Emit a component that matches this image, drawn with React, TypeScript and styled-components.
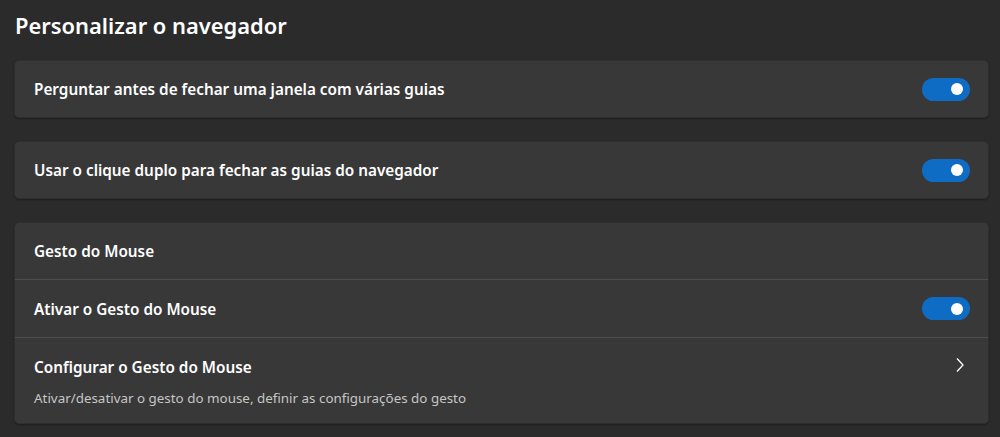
import React from "react";
import styled, { createGlobalStyle } from "styled-components";

const Global = createGlobalStyle`
  html, body { margin: 0; padding: 0; background: #2b2b2b; }
  body { font-family: "Noto Sans", "Open Sans", sans-serif; color: #ffffff; }
`;

const Page = styled.div`
  width: 1000px;
  height: 437px;
  box-sizing: border-box;
  padding: 11px 11px 0 14px;
  background: #2b2b2b;
  display: flex;
  flex-direction: column;
  overflow: hidden;
`;

const Title = styled.h1`
  margin: 0 0 19px 1px;
  font-size: 21.9px;
  line-height: 30px;
  font-weight: 600;
  color: #ffffff;
`;

const Stack = styled.div`
  display: flex;
  flex-direction: column;
  gap: 23px;
`;

const Card = styled.section`
  background: #383838;
  border: 1px solid #2f2f2f;
  border-radius: 5px;
  box-shadow: 0 1px 2px rgba(0, 0, 0, 0.35);
  display: flex;
  flex-direction: column;
`;

const Row = styled.div<{ $h: number; $divider?: boolean }>`
  min-height: ${(p) => p.$h}px;
  box-sizing: border-box;
  padding: 0 18px 0 19px;
  display: flex;
  align-items: center;
  justify-content: space-between;
  border-top: ${(p) => (p.$divider ? "1px solid #4e4e4e" : "none")};
`;

const TextCol = styled.div`
  display: flex;
  flex-direction: column;
  gap: 12px;
  padding-top: 2px;
`;

const Label = styled.div`
  font-size: 15.3px;
  line-height: 20px;
  font-weight: 600;
  color: #ffffff;
`;

const Sub = styled.div`
  font-size: 13.4px;
  line-height: 18px;
  color: #c6c6c6;
`;

const Toggle = styled.div`
  width: 48px;
  height: 23px;
  border-radius: 12px;
  background: #0f6cc4;
  display: flex;
  align-items: center;
  justify-content: flex-end;
  padding: 0 7px;
  box-sizing: border-box;
  flex-shrink: 0;
`;

const Knob = styled.div`
  width: 12px;
  height: 12px;
  border-radius: 50%;
  background: #ffffff;
`;

const Chevron = styled.svg`
  width: 10px;
  height: 16px;
  margin: 19px 5px 0 0;
  align-self: flex-start;
`;

const Switch = () => (
  <Toggle>
    <Knob />
  </Toggle>
);

export default function App() {
  return (
    <Page>
      <Global />
      <Title>Personalizar o navegador</Title>
      <Stack>
        <Card>
          <Row $h={56}>
            <Label>Perguntar antes de fechar uma janela com várias guias</Label>
            <Switch />
          </Row>
        </Card>
        <Card>
          <Row $h={56}>
            <Label>Usar o clique duplo para fechar as guias do navegador</Label>
            <Switch />
          </Row>
        </Card>
        <Card>
          <Row $h={56}>
            <Label>Gesto do Mouse</Label>
          </Row>
          <Row $h={58} $divider>
            <Label>Ativar o Gesto do Mouse</Label>
            <Switch />
          </Row>
          <Row $h={86} $divider>
            <TextCol>
              <Label>Configurar o Gesto do Mouse</Label>
              <Sub>Ativar/desativar o gesto do mouse, definir as configurações do gesto</Sub>
            </TextCol>
            <Chevron viewBox="0 0 10 16">
              <path d="M2 1.5 L8 8 L2 14.5" fill="none" stroke="#ffffff" strokeWidth="1.3" />
            </Chevron>
          </Row>
        </Card>
      </Stack>
    </Page>
  );
}
